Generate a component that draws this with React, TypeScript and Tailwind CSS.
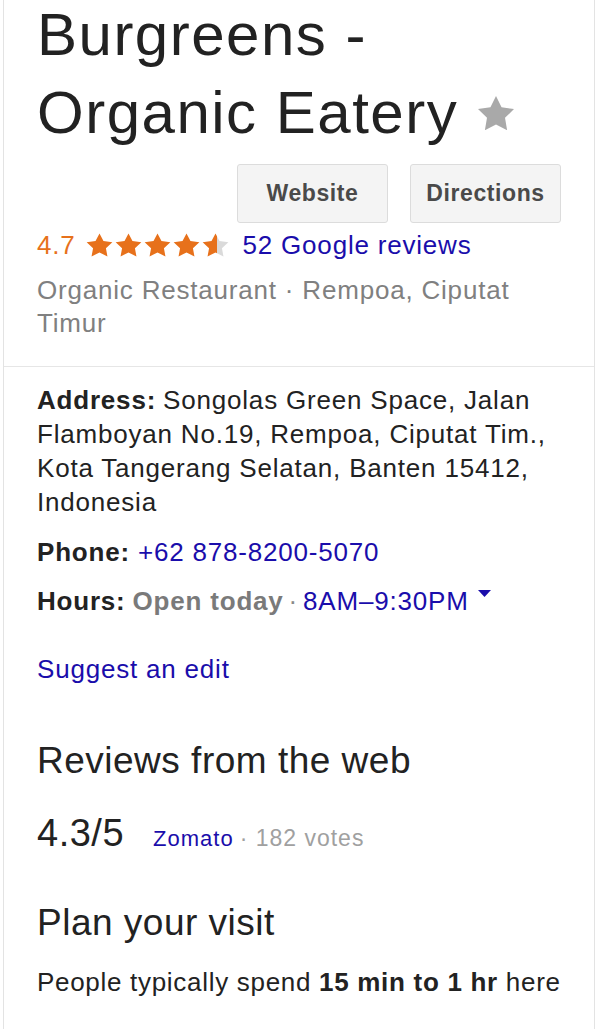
import React from "react";

const STAR = "M12 2l3.09 6.26L22 9.27l-5 4.87 1.18 6.88L12 17.77l-6.18 3.25L7 14.14 2 9.27l6.91-1.01L12 2z";

function Star({ half = false }: { half?: boolean }) {
  return (
    <svg width="27" height="24" viewBox="1.5 1.5 21 20" preserveAspectRatio="none" className="block">
      {half ? (
        <>
          <defs>
            <linearGradient id="halfStar" x1="0" x2="1" y1="0" y2="0">
              <stop offset="56%" stopColor="#e7711b" />
              <stop offset="56%" stopColor="#dadada" />
            </linearGradient>
          </defs>
          <path d={STAR} fill="url(#halfStar)" />
        </>
      ) : (
        <path d={STAR} fill="#e7711b" />
      )}
    </svg>
  );
}

export default function App() {
  return (
    <div className="w-[600px] h-[1033px] bg-white overflow-hidden font-['Liberation_Sans',Arial,sans-serif] text-[#222]">
      <div className="ml-[3px] w-[592px] h-full border-x border-[#e3e3e3]">
        {/* Header section */}
        <div className="px-[33px] pb-[26px] border-b border-[#e6e6e6]">
          <div className="mt-[-4px] text-[60px] leading-[78px] tracking-[1.5px] text-[#222]">
            <div>Burgreens -</div>
            <div className="flex items-center">
              <span>Organic Eatery</span>
              <svg width="36" height="36" viewBox="2 2 20 20" className="ml-[20px] mt-[2px]">
                <path d={STAR} fill="#a9a9a9" />
              </svg>
            </div>
          </div>

          <div className="mt-[12px] flex justify-end gap-[22px]">
            <button className="w-[151px] h-[59px] rounded-[3px] border border-[#dcdcdc] bg-[#f4f4f4] text-[23px] font-bold text-[#4a4a4a] tracking-[0.6px]">
              Website
            </button>
            <button className="w-[151px] h-[59px] rounded-[3px] border border-[#dcdcdc] bg-[#f4f4f4] text-[23px] font-bold text-[#4a4a4a] tracking-[0.6px]">
              Directions
            </button>
          </div>

          <div className="mt-[5px] flex items-center h-[34px] text-[26px] tracking-[0.8px]">
            <span className="text-[#e7711b]">4.7</span>
            <div className="ml-[10px] flex gap-[2px]">
              <Star />
              <Star />
              <Star />
              <Star />
              <Star half />
            </div>
            <span className="ml-[14px] text-[#1a0dab]">52 Google reviews</span>
          </div>

          <div className="mt-[12px] text-[26px] leading-[33px] tracking-[0.8px] text-[#808080]">
            Organic Restaurant · Rempoa, Ciputat Timur
          </div>
        </div>

        {/* Details */}
        <div className="px-[33px] pt-[16px]">
          <p className="text-[26px] leading-[34px] tracking-[0.8px] text-[#222]">
            <b className="mr-[7px]">Address:</b>Songolas Green Space, Jalan Flamboyan No.19, Rempoa, Ciputat Tim., Kota Tangerang Selatan, Banten 15412, Indonesia
          </p>

          <p className="mt-[16px] text-[26px] leading-[34px] tracking-[0.8px]">
            <b>Phone:</b> <span className="text-[#1a0dab]">+62 878-8200-5070</span>
          </p>

          <div className="mt-[15px] flex items-center text-[26px] leading-[34px] tracking-[0.8px]">
            <b>Hours:</b>
            <b className="ml-[7px] text-[#7a7a7a]">Open today</b>
            <span className="ml-[5px] text-[#8a8a8a]">·</span>
            <span className="ml-[5px] text-[#1a0dab]">8AM–9:30PM</span>
            <svg width="13" height="8" viewBox="0 0 13 8" className="ml-[9px] mb-[14px]">
              <path d="M0 0h13L6.5 7z" fill="#1a0dab" />
            </svg>
          </div>

          <p className="mt-[34px] text-[26px] leading-[34px] tracking-[0.8px] text-[#1a0dab]">
            Suggest an edit
          </p>

          <h2 className="mt-[53px] text-[37px] leading-[44px] tracking-[0.5px] text-[#222]">
            Reviews from the web
          </h2>

          <div className="mt-[28px] flex items-baseline h-[44px]">
            <span className="text-[38px] leading-[44px] tracking-[0.5px] text-[#222]">4.3/5</span>
            <span className="ml-[29px] text-[22px] tracking-[1px] text-[#1a0dab]">Zomato</span>
            <span className="ml-[6px] text-[23px] tracking-[1px] text-[#a0a0a0]">· 182 votes</span>
          </div>

          <h2 className="mt-[46px] text-[37px] leading-[44px] tracking-[0.5px] text-[#222]">
            Plan your visit
          </h2>

          <p className="mt-[20px] text-[26px] leading-[34px] tracking-[0.7px] text-[#222]">
            People typically spend <b>15 min to 1 hr</b> here
          </p>
        </div>
      </div>
    </div>
  );
}
